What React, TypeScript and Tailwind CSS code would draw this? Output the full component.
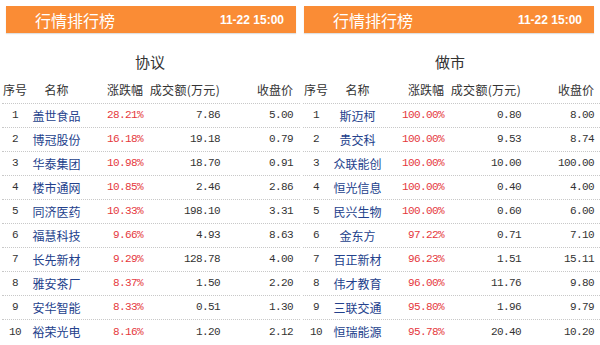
import React from 'react';

interface Row {
  name: string;
  pct: string;
  amount: string;
  price: string;
}

const xieyi: Row[] = [
  { name: '盖世食品', pct: '28.21%', amount: '7.86', price: '5.00' },
  { name: '博冠股份', pct: '16.18%', amount: '19.18', price: '0.79' },
  { name: '华泰集团', pct: '10.98%', amount: '18.70', price: '0.91' },
  { name: '楼市通网', pct: '10.85%', amount: '2.46', price: '2.86' },
  { name: '同济医药', pct: '10.33%', amount: '198.10', price: '3.31' },
  { name: '福慧科技', pct: '9.66%', amount: '4.93', price: '8.63' },
  { name: '长先新材', pct: '9.29%', amount: '128.78', price: '4.00' },
  { name: '雅安茶厂', pct: '8.37%', amount: '1.50', price: '2.20' },
  { name: '安华智能', pct: '8.33%', amount: '0.51', price: '1.30' },
  { name: '裕荣光电', pct: '8.16%', amount: '1.20', price: '2.12' },
];

const zuoshi: Row[] = [
  { name: '斯迈柯', pct: '100.00%', amount: '0.80', price: '8.00' },
  { name: '贵交科', pct: '100.00%', amount: '9.53', price: '8.74' },
  { name: '众联能创', pct: '100.00%', amount: '10.00', price: '100.00' },
  { name: '恒光信息', pct: '100.00%', amount: '0.40', price: '4.00' },
  { name: '民兴生物', pct: '100.00%', amount: '0.60', price: '6.00' },
  { name: '金东方', pct: '97.22%', amount: '0.71', price: '7.10' },
  { name: '百正新材', pct: '96.23%', amount: '1.51', price: '15.11' },
  { name: '伟才教育', pct: '96.00%', amount: '11.76', price: '9.80' },
  { name: '三联交通', pct: '95.80%', amount: '1.96', price: '9.79' },
  { name: '恒瑞能源', pct: '95.78%', amount: '20.40', price: '10.20' },
];

const cjk = "font-['Noto_Sans_CJK_SC',sans-serif]";
const mono = "font-['Liberation_Mono','Noto_Sans_CJK_SC',monospace] text-[11px] tracking-[-0.6px]";
const cols = 'grid grid-cols-[26px_57px_58px_77px_73px] items-center';

function RankPanel({ title, rows, headerClass, tableClass }: { title: string; rows: Row[]; headerClass: string; tableClass: string }) {
  return (
    <div className="w-[300px] pt-[6px]">
      <div className={`${headerClass} h-[27px] flex items-center justify-between bg-[#fa8c35] shadow-[0_1px_1px_rgba(0,0,0,0.12)] pl-[29px] pr-[12px] text-white`}>
        <span className={`${cjk} text-[16px]`}>行情排行榜</span>
        <span className="font-['Liberation_Sans',sans-serif] text-[12px] font-bold">11-22 15:00</span>
      </div>

      <div className={`${cjk} mt-[14px] h-[30px] flex items-center justify-center text-[15px] text-[#333]`}>
        {title}
      </div>

      <div className={tableClass}>
        <div className={`${cols} ${cjk} h-[27px] border-b border-dotted border-[#c8c8c8] text-[12px] text-[#333] whitespace-nowrap`}>
          <span className="text-center">序号</span>
          <span className="text-center">名称</span>
          <span className="text-right">涨跌幅</span>
          <span className="text-right tracking-[0.3px]">成交额(万元)</span>
          <span className="text-right">收盘价</span>
        </div>
        {rows.map((r, i) => (
          <div
            key={r.name}
            className={`${cols} h-[24px] ${i < rows.length - 1 ? 'border-b border-dotted border-[#c8c8c8]' : ''}`}
          >
            <span className={`${mono} text-center text-[#333]`}>{i + 1}</span>
            <span className={`${cjk} text-center text-[12px] text-[#23418c] whitespace-nowrap`}>{r.name}</span>
            <span className={`${mono} text-right text-[#e5383d]`}>{r.pct}</span>
            <span className={`${mono} text-right text-[#333]`}>{r.amount}</span>
            <span className={`${mono} text-right text-[#333]`}>{r.price}</span>
          </div>
        ))}
      </div>
    </div>
  );
}

export default function App() {
  return (
    <div className="w-[600px] h-[345px] bg-white flex overflow-hidden">
      <RankPanel title="协议" rows={xieyi} headerClass="ml-[6px] mr-[4px]" tableClass="ml-[2px]" />
      <RankPanel title="做市" rows={zuoshi} headerClass="ml-[4px] mr-[6px]" tableClass="ml-[3px]" />
    </div>
  );
}
